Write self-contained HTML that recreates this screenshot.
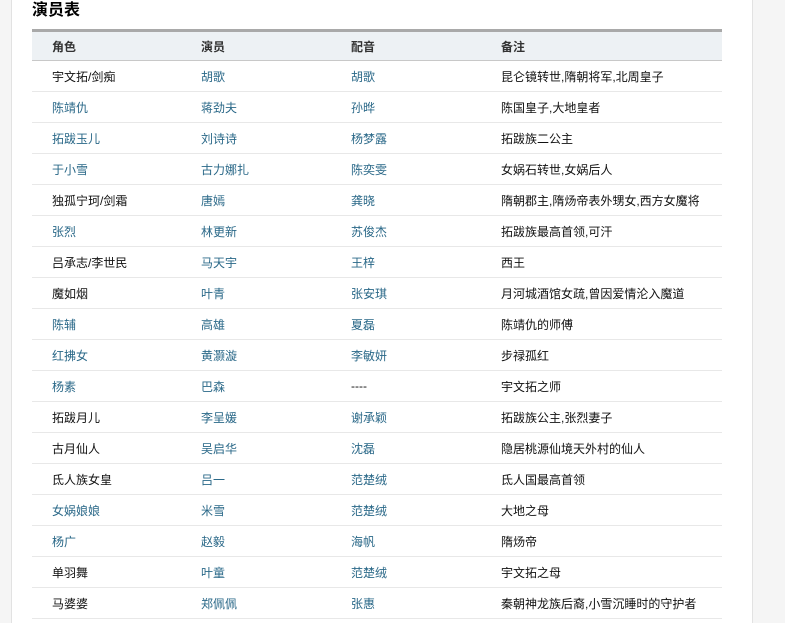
<!DOCTYPE html>
<html><head><meta charset="utf-8"><style>
body{margin:0;width:785px;height:623px;overflow:hidden;background:#f5f5f5;font-family:"Liberation Sans","Noto Sans CJK SC",sans-serif;font-size:12px;}
.page{position:absolute;left:11px;top:0;width:740px;height:623px;background:#fff;border-left:1px solid #e2e2e2;border-right:1px solid #e2e2e2;}
h2{position:absolute;left:20px;top:-4px;margin:0;font-size:16px;font-weight:bold;color:#000;}
table{position:absolute;left:20px;top:29px;width:690px;border-collapse:collapse;border-top:3px solid #a9a9a9;}
th{background:#edf1f4;height:28px;text-align:left;font-weight:bold;color:#333;border-bottom:1px solid #c8c8c8;padding:0}
td{height:30px;border-bottom:1px solid #e8e8e8;padding:0;color:#111}
th:first-child,td:first-child{padding-left:20px;width:149px}
.c2{width:150px}.c3{width:150px}
a{color:#2a6888;text-decoration:none}
</style></head><body><div class="page">
<h2>演员表</h2>
<table>
<tr><th>角色</th><th class="c2">演员</th><th class="c3">配音</th><th>备注</th></tr>
<tr><td>宇文拓/剑痴</td><td><a>胡歌</a></td><td><a>胡歌</a></td><td>昆仑镜转世,隋朝将军,北周皇子</td></tr>
<tr><td><a>陈靖仇</a></td><td><a>蒋劲夫</a></td><td><a>孙晔</a></td><td>陈国皇子,大地皇者</td></tr>
<tr><td><a>拓跋玉儿</a></td><td><a>刘诗诗</a></td><td><a>杨梦露</a></td><td>拓跋族二公主</td></tr>
<tr><td><a>于小雪</a></td><td><a>古力娜扎</a></td><td><a>陈奕雯</a></td><td>女娲石转世,女娲后人</td></tr>
<tr><td>独孤宁珂/剑霜</td><td><a>唐嫣</a></td><td><a>龚晓</a></td><td>隋朝郡主,隋炀帝表外甥女,西方女魔将</td></tr>
<tr><td><a>张烈</a></td><td><a>林更新</a></td><td><a>苏俊杰</a></td><td>拓跋族最高首领,可汗</td></tr>
<tr><td>吕承志/李世民</td><td><a>马天宇</a></td><td><a>王梓</a></td><td>西王</td></tr>
<tr><td>魔如烟</td><td><a>叶青</a></td><td><a>张安琪</a></td><td>月河城酒馆女疏,曾因爱情沦入魔道</td></tr>
<tr><td><a>陈辅</a></td><td><a>高雄</a></td><td><a>夏磊</a></td><td>陈靖仇的师傅</td></tr>
<tr><td><a>红拂女</a></td><td><a>黄灏漩</a></td><td><a>李敏妍</a></td><td>步禄孤红</td></tr>
<tr><td><a>杨素</a></td><td><a>巴森</a></td><td>----</td><td>宇文拓之师</td></tr>
<tr><td>拓跋月儿</td><td><a>李呈媛</a></td><td><a>谢承颖</a></td><td>拓跋族公主,张烈妻子</td></tr>
<tr><td>古月仙人</td><td><a>吴启华</a></td><td><a>沈磊</a></td><td>隐居桃源仙境天外村的仙人</td></tr>
<tr><td>氐人族女皇</td><td><a>吕一</a></td><td><a>范楚绒</a></td><td>氐人国最高首领</td></tr>
<tr><td><a>女娲娘娘</a></td><td><a>米雪</a></td><td><a>范楚绒</a></td><td>大地之母</td></tr>
<tr><td><a>杨广</a></td><td><a>赵毅</a></td><td><a>海帆</a></td><td>隋炀帝</td></tr>
<tr><td>单羽舞</td><td><a>叶童</a></td><td><a>范楚绒</a></td><td>宇文拓之母</td></tr>
<tr><td>马婆婆</td><td><a>郑佩佩</a></td><td><a>张惠</a></td><td>秦朝神龙族后裔,小雪沉睡时的守护者</td></tr>
</table></div></body></html>
